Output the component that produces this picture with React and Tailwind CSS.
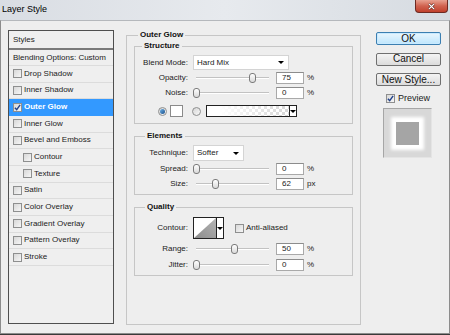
import React from "react";

const styleItems = [
  { name: "Drop Shadow" },
  { name: "Inner Shadow" },
  { name: "Outer Glow", checked: true, selected: true },
  { name: "Inner Glow" },
  { name: "Bevel and Emboss" },
  { name: "Contour", sub: true },
  { name: "Texture", sub: true },
  { name: "Satin" },
  { name: "Color Overlay" },
  { name: "Gradient Overlay" },
  { name: "Pattern Overlay" },
  { name: "Stroke" },
];

const Checkbox = ({ checked }) => (
  <span className="flex h-[9px] w-[9px] shrink-0 items-center justify-center border border-[#8e8f8f] bg-linear-to-br from-[#d8d8d8] to-[#f6f6f6]">
    {checked && (
      <svg viewBox="0 0 8 8" className="h-[7px] w-[7px]">
        <path d="M1 4.2 L3.1 6.5 L7 1" stroke="#21418a" strokeWidth="1.6" fill="none" />
      </svg>
    )}
  </span>
);

const Radio = ({ checked }) => (
  <span className="flex h-[9px] w-[9px] shrink-0 items-center justify-center rounded-full border border-[#8e8f8f] bg-linear-to-br from-[#d6d6d6] to-[#f8f8f8]">
    {checked && <span className="h-[5px] w-[5px] rounded-full bg-linear-to-br from-[#6fb4ea] to-[#1b4f8a]" />}
  </span>
);

const Arrow = () => (
  <span className="h-0 w-0 border-x-[3px] border-t-[3px] border-x-transparent border-t-black" />
);

const Slider = ({ value, max = 100 }) => {
  const center = 3.7 + (value / max) * 75;
  return (
    <div className="relative h-[12px] w-[80px]">
      <div className="absolute left-[3px] right-[4px] top-[5px] h-[2px] border-t border-b border-t-[#c2c2c2] border-b-white" />
      <div
        className="absolute top-[1px] h-[10px] w-[7px] rounded-[3px] border border-[#7b7b7b] bg-linear-to-b from-white to-[#d9d9d9]"
        style={{ left: center - 3.5 }}
      />
    </div>
  );
};

const NumberField = ({ value }) => (
  <div className="flex h-[12px] w-[28px] items-center border border-[#a9a9a9] border-t-[#8c8c8c] bg-white pl-[5px] text-[8px] leading-none text-[#222]">
    {value}
  </div>
);

const SliderRow = ({ label, value, max, unit, className }) => (
  <div className={`flex h-[12px] items-center ${className}`}>
    <span className="w-[54px] pr-[1px] text-right text-[8px] leading-none text-[#222]">{label}</span>
    <div className="ml-[4px]">
      <Slider value={value} max={max} />
    </div>
    <div className="ml-[3px]">
      <NumberField value={value} />
    </div>
    <span className="ml-[3px] text-[8px] leading-none text-[#222]">{unit}</span>
  </div>
);

const Group = ({ title, className, legendClass, children }) => (
  <fieldset className={`border border-[#c6c6c6] px-[7px] ${className}`}>
    <legend className={`px-[2px] text-[8px] font-bold leading-[10px] text-[#111] ${legendClass}`}>{title}</legend>
    {children}
  </fieldset>
);

const Button = ({ children, primary }) => (
  <button
    className={`flex h-[13px] w-[65px] items-center justify-center rounded-[2px] border text-[10px] leading-none text-[#111] ${
      primary
        ? "border-[#3c7fb1] bg-linear-to-b from-[#eaf6fd] to-[#bee6fd] shadow-[inset_0_0_0_1px_#c9eaff]"
        : "border-[#707070] bg-linear-to-b from-[#f4f4f4] to-[#dcdcdc]"
    }`}
  >
    {children}
  </button>
);

export default function App() {
  return (
    <div className="flex h-[335px] w-[450px] flex-col overflow-hidden bg-[#eeeeee] font-['Liberation_Sans',Arial,sans-serif] text-[#222]">
      {/* title bar */}
      <div className="flex h-[20px] shrink-0 items-start justify-between bg-linear-to-r from-[#d9dde3] via-[#e7eaee] to-[#d6dbe1]">
        <span className="ml-[2px] mt-[4px] text-[9px] leading-[10px] text-black">Layer Style</span>
        <div className="mr-[2px] flex h-[13px] w-[33px] items-center justify-center rounded-b-[4px] border border-t-0 border-[#6d2a22] bg-linear-to-b from-[#e7a191] via-[#d0624f] to-[#c0402c]">
          <svg viewBox="0 0 10 8" className="h-[7px] w-[9px]">
            <path d="M2 1 L8 7 M8 1 L2 7" stroke="#5a1a12" strokeWidth="2.6" />
            <path d="M2 1 L8 7 M8 1 L2 7" stroke="white" strokeWidth="1.6" />
          </svg>
        </div>
      </div>

      {/* body */}
      <div className="flex h-[314px] shrink-0 items-start border border-[#8c8c8c] border-t-[#b5b8bc] pl-[7px] pt-[9px]">
        {/* styles list */}
        <div className="flex h-[294px] w-[106px] shrink-0 flex-col border border-[#4f4f4f] bg-[#efefef] text-[8px] leading-none text-[#222]">
          <div className="flex h-[17px] shrink-0 items-center pl-[4px]">Styles</div>
          <div className="h-[2px] shrink-0 bg-[#7a7a7a]" />
          <div className="flex h-[16px] shrink-0 items-center border-b border-[#dcdcdc] pl-[4px]">
            Blending Options: Custom
          </div>
          {styleItems.map((item) => (
            <div
              key={item.name}
              className={`flex h-[16.67px] shrink-0 items-center gap-[2px] border-b ${
                item.sub ? "pl-[14px]" : "pl-[4px]"
              } ${item.selected ? "border-[#3399ff] bg-[#3399ff] font-bold text-white" : "border-[#dcdcdc]"}`}
            >
              <Checkbox checked={item.checked} />
              <span>{item.name}</span>
            </div>
          ))}
        </div>

        {/* outer glow panel */}
        <Group title="Outer Glow" className="ml-[12px] h-[295px] w-[235px] shrink-0" legendClass="ml-[4px]">
          <Group title="Structure" className="mt-[1px] pb-[6px] pl-0" legendClass="ml-[7px]">
            <div className="mt-[4px] flex h-[15px] items-center">
              <span className="w-[54px] pr-[1px] text-right text-[8px] leading-none">Blend Mode:</span>
              <div className="ml-[4px] flex h-[15px] w-[96px] items-center justify-between border border-[#d4d4d4] bg-white pl-[3px] pr-[4px] text-[8px] leading-none">
                <span>Hard Mix</span>
                <Arrow />
              </div>
            </div>
            <SliderRow label="Opacity:" value={75} unit="%" className="mt-[2px]" />
            <SliderRow label="Noise:" value={0} unit="%" className="mt-[3px]" />
            <div className="mt-[6px] flex h-[12px] items-center pl-[23px]">
              <Radio checked />
              <span className="ml-[3px] h-[12px] w-[13px] border border-[#8a8a8a] bg-white" />
              <span className="ml-[9px]">
                <Radio />
              </span>
              <div className="ml-[5px] flex h-[12px] w-[91px] border border-[#222]">
                <div className="flex-1 bg-[linear-gradient(to_right,white_15%,rgba(255,255,255,0))_,conic-gradient(#d6d6d6_25%,white_0_50%,#d6d6d6_0_75%,white_0)] [background-size:100%_100%,6px_6px]" />
                <div className="flex w-[7px] items-center justify-center border-l border-[#222] bg-white">
                  <Arrow />
                </div>
              </div>
            </div>
          </Group>

          <Group title="Elements" className="mt-[7px] pb-[4px] pl-0" legendClass="ml-[10px]">
            <div className="mt-[4px] flex h-[16px] items-center">
              <span className="w-[54px] pr-[1px] text-right text-[8px] leading-none">Technique:</span>
              <div className="ml-[4px] flex h-[16px] w-[51px] items-center justify-between border border-[#d4d4d4] bg-white pl-[3px] pr-[4px] text-[8px] leading-none">
                <span>Softer</span>
                <Arrow />
              </div>
            </div>
            <SliderRow label="Spread:" value={0} unit="%" className="mt-[2px]" />
            <SliderRow label="Size:" value={62} max={250} unit="px" className="mt-[3px]" />
          </Group>

          <Group title="Quality" className="mt-[7px] pb-[4px] pl-0" legendClass="ml-[10px]">
            <div className="mt-[5px] flex h-[22px] items-center">
              <span className="w-[54px] pr-[1px] text-right text-[8px] leading-none">Contour:</span>
              <div className="ml-[4px] flex h-[22px] w-[31px] border border-[#222] bg-white">
                <svg viewBox="0 0 22 20" preserveAspectRatio="none" className="h-full w-[22px]">
                  <defs>
                    <linearGradient id="cg" x1="0" y1="1" x2="1" y2="0">
                      <stop offset="0" stopColor="#8c8c8c" />
                      <stop offset="1" stopColor="#b4b4b4" />
                    </linearGradient>
                  </defs>
                  <path d="M0 20 L22 0 L22 20 Z" fill="url(#cg)" />
                </svg>
                <div className="flex flex-1 items-center justify-center border-l border-[#222]">
                  <Arrow />
                </div>
              </div>
              <span className="ml-[11px]">
                <Checkbox />
              </span>
              <span className="ml-[2px] text-[8px] leading-none">Anti-aliased</span>
            </div>
            <SliderRow label="Range:" value={50} unit="%" className="mt-[4px]" />
            <SliderRow label="Jitter:" value={0} unit="%" className="mt-[4px]" />
          </Group>
        </Group>

        {/* buttons & preview */}
        <div className="ml-[15px] flex w-[65px] shrink-0 flex-col pt-[2px]">
          <Button primary>OK</Button>
          <div className="mt-[7.7px]">
            <Button>Cancel</Button>
          </div>
          <div className="mt-[7.7px]">
            <Button>New Style...</Button>
          </div>
          <div className="ml-[10px] mt-[7px] flex h-[10px] items-center gap-[3px]">
            <Checkbox checked />
            <span className="text-[9px] leading-none">Preview</span>
          </div>
          <div className="ml-[7px] mt-[5px] flex h-[50px] w-[49px] items-center justify-center border border-[#a6a6a6] border-b-[#e4e4e4] border-r-[#e4e4e4] bg-[#d8d8d8]">
            <div className="h-[23px] w-[23px] bg-[#a5a5a5] shadow-[0_0_3px_5px_white]" />
          </div>
        </div>
      </div>
      <div className="h-[1px] shrink-0 bg-[#3a3a3a]" />
    </div>
  );
}
